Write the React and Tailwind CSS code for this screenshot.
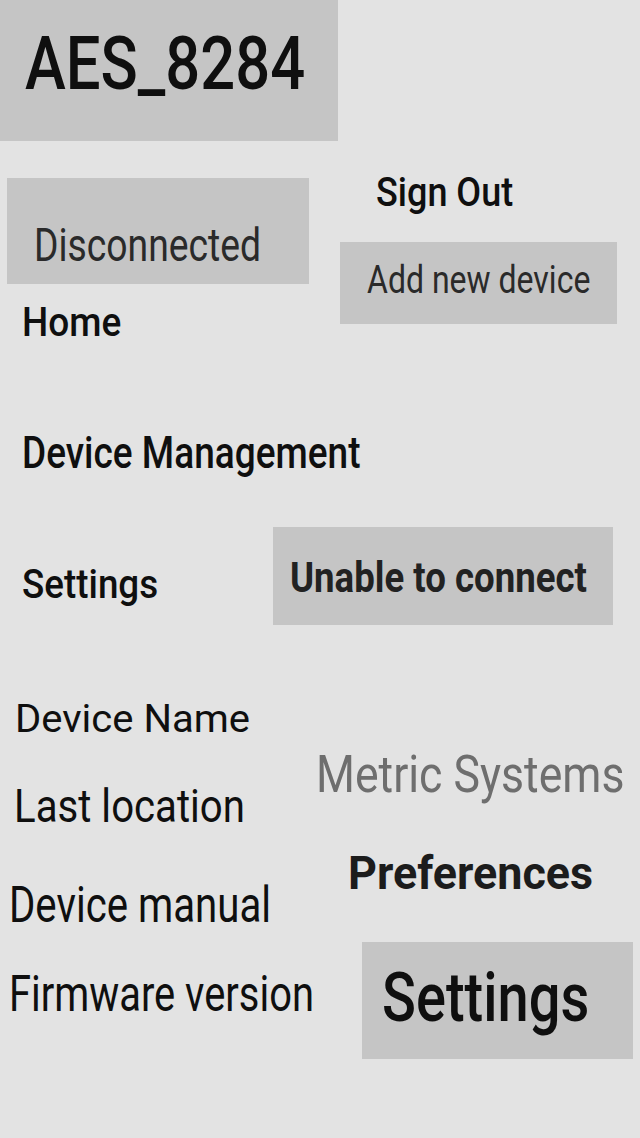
import React from "react";

const base = "block leading-none whitespace-nowrap origin-[0_0.84em]";

export default function App() {
  return (
    <div className="w-[640px] h-[1138px] overflow-hidden bg-[#e3e3e3] font-[Roboto,sans-serif] text-[#0f0f0f]">
      {/* device title */}
      <div className="w-[338px] h-[141px] bg-[#c5c5c5] pt-[38px] pl-[25px]">
        <span className={`${base} text-[61.5px] font-medium scale-y-[1.21]`}>AES_8284</span>
      </div>

      {/* status + account */}
      <div className="flex items-start">
        <div className="w-[340px] pt-[37px] pl-[7px]">
          <div className="w-[302px] h-[106px] bg-[#c5c5c5] pt-[52px] pl-[27px]">
            <span className={`${base} text-[37.3px] text-[#2a2a2a] scale-y-[1.24]`}>Disconnected</span>
          </div>
          <span className={`${base} mt-[21px] ml-[15px] text-[37px] font-medium scale-y-[1.1]`}>Home</span>
        </div>
        <div className="pt-[35px]">
          <span className={`${base} ml-[36px] text-[36px] font-medium scale-y-[1.13]`}>Sign Out</span>
          <div className="mt-[30px] w-[277px] h-[82px] bg-[#c5c5c5] pt-[24px] pl-[27px]">
            <span className={`${base} text-[32px] text-[#2a2a2a] scale-y-[1.19]`}>Add new device</span>
          </div>
        </div>
      </div>

      <span className={`${base} mt-[95px] ml-[22px] text-[37px] font-medium scale-y-[1.18]`}>
        Device Management
      </span>

      <div className="flex items-start">
        <div className="w-[273px] pt-[94px]">
          <span className={`${base} ml-[22px] text-[36.8px] font-medium scale-y-[1.11]`}>Settings</span>
        </div>
        <div className="mt-[53px] w-[340px] h-[98px] bg-[#c5c5c5] pt-[35px] pl-[17px]">
          <span className={`${base} text-[36.6px] font-bold text-[#222] scale-y-[1.15]`}>Unable to connect</span>
        </div>
      </div>

      {/* device details + preferences */}
      <div className="flex items-start">
        <div className="w-[310px] shrink-0">
          <span className={`${base} mt-[74.4px] ml-[15px] text-[40px] scale-y-[0.98]`}>Device Name</span>
          <span className={`${base} mt-[49.8px] ml-[14px] text-[40.2px] scale-y-[1.15]`}>Last location</span>
          <span className={`${base} mt-[59.8px] ml-[9px] text-[40.2px] scale-y-[1.26]`}>Device manual</span>
          <span className={`${base} mt-[49.1px] ml-[9px] text-[39.9px] scale-y-[1.23]`}>Firmware version</span>
        </div>
        <div>
          <span className={`${base} mt-[129.5px] ml-[6px] text-[44.6px] text-[#6e6e6e] scale-y-[1.17]`}>Metric Systems</span>
          <span className={`${base} mt-[53.2px] ml-[38px] text-[44.9px] font-bold text-[#1c1c1c] scale-y-[1.03]`}>Preferences</span>
          <div className="mt-[44.8px] ml-[52px] w-[271px] h-[117px] bg-[#c5c5c5] pt-[32px] pl-[20px]">
            <span className={`${base} text-[56px] font-medium scale-y-[1.21]`}>Settings</span>
          </div>
        </div>
      </div>
    </div>
  );
}
